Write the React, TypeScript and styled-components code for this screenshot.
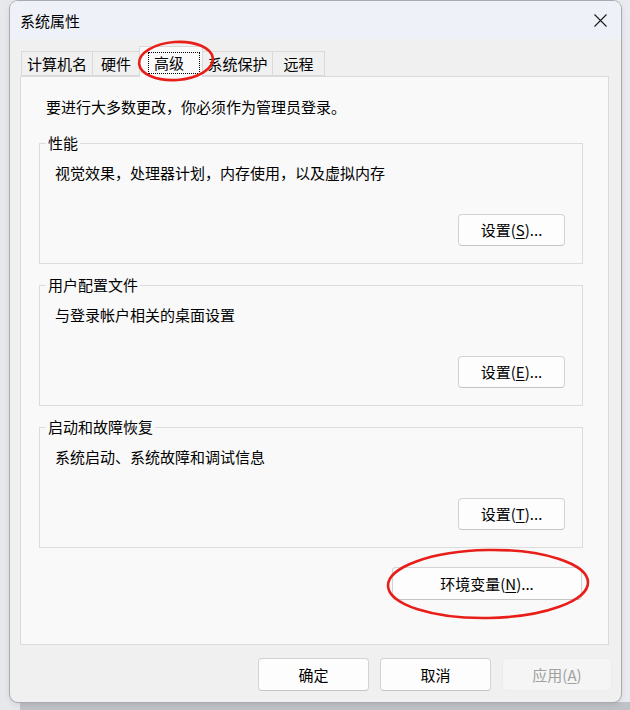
import React from "react";
import styled, { createGlobalStyle } from "styled-components";

const Global = createGlobalStyle`
  html, body { margin: 0; padding: 0; }
  body {
    font-family: "Noto Sans CJK SC", "Noto Sans", sans-serif;
    font-size: 15px;
    color: #000;
  }
`;

const Desktop = styled.div`
  width: 630px;
  height: 710px;
  overflow: hidden;
  background:
    linear-gradient(to right, #e6e8eb 0, #e6e8eb 20px, transparent 20px),
    linear-gradient(to bottom, #e9ebee 0, #e9ebee 702px, #bfc2c6 702px);
  padding-top: 1px;
  box-sizing: border-box;
`;

const Window = styled.div`
  position: relative;
  margin-left: 10px;
  width: 611px;
  height: 701px;
  border-radius: 8px;
  background: #f0f0f0;
  box-shadow: 0 0 0 1px #a9abae, 0 2px 6px rgba(0, 0, 0, 0.12);
  overflow: hidden;
  display: flex;
  flex-direction: column;
`;

const TitleBar = styled.div`
  height: 38px;
  flex: none;
  background: #eef2f8;
  display: flex;
  align-items: center;
  justify-content: space-between;
  padding-left: 10px;
`;

const Title = styled.span`
  line-height: 20px;
  margin-top: 1px;
`;

const CloseButton = styled.div`
  width: 46px;
  height: 38px;
  display: flex;
  align-items: center;
  justify-content: center;
  margin-right: -2px;
`;

const TabStrip = styled.div`
  height: 37px;
  flex: none;
  display: flex;
  align-items: flex-end;
  margin-left: 11px;
  position: relative;
  z-index: 1;
`;

const Tab = styled.div<{ $w: number; $active?: boolean }>`
  width: ${(p) => p.$w}px;
  height: ${(p) => (p.$active ? 31 : 25)}px;
  box-sizing: border-box;
  border: 1px solid #dadada;
  border-bottom: ${(p) => (p.$active ? "none" : "1px solid #dadada")};
  margin-left: -1px;
  background: ${(p) => (p.$active ? "#f9f9f9" : "#f0f0f0")};
  display: flex;
  align-items: ${(p) => (p.$active ? "flex-start" : "center")};
  justify-content: ${(p) => (p.$active ? "flex-start" : "center")};
  padding: ${(p) => (p.$active ? "5px 0 0 8px" : "0")};
  line-height: 20px;
  white-space: nowrap;
  margin-bottom: ${(p) => (p.$active ? "-1px" : "0")};
  &:first-child { margin-left: 0; }
`;

const FocusBox = styled.span`
  width: 52px;
  height: 22px;
  box-sizing: border-box;
  border: 1px dotted #000;
  padding-left: 5px;
  line-height: 20px;
`;

const Panel = styled.div`
  margin-left: 10px;
  width: 589px;
  height: 569px;
  flex: none;
  box-sizing: border-box;
  border: 1px solid #dadada;
  background: #f9f9f9;
  padding: 20px 25px 0 18px;
  display: flex;
  flex-direction: column;
`;

const Intro = styled.div`
  padding-left: 7px;
  line-height: 20px;
  margin-bottom: 16px;
`;

const Group = styled.fieldset`
  margin: 0 0 11px 0;
  padding: 0 17px 17px 15px;
  border: 1px solid #dcdcdc;
  min-width: 0;
  display: flex;
  flex-direction: column;
`;

const Legend = styled.legend`
  margin-left: -9px;
  padding: 0 2px;
  line-height: 20px;
`;

const GroupText = styled.div`
  line-height: 20px;
  margin-top: 10px;
  margin-bottom: 31px;
`;

const Button = styled.div<{ $w: number; $h?: number; $disabled?: boolean }>`
  width: ${(p) => p.$w}px;
  height: ${(p) => p.$h ?? 32}px;
  box-sizing: border-box;
  border: 1px solid ${(p) => (p.$disabled ? "#ececec" : "#d3d3d3")};
  border-bottom-color: ${(p) => (p.$disabled ? "#ececec" : "#c4c4c4")};
  border-radius: 4px;
  background: ${(p) => (p.$disabled ? "#f5f5f5" : "#fdfdfd")};
  color: ${(p) => (p.$disabled ? "#a0a0a0" : "#000")};
  display: flex;
  align-items: center;
  justify-content: center;
  line-height: 20px;
  align-self: flex-end;
  white-space: nowrap;
`;

const Key = styled.span`
  text-decoration: underline;
  text-underline-offset: 2px;
`;

const EnvRow = styled.div`
  display: flex;
  justify-content: flex-end;
  margin-top: 8px;
  margin-right: 1px;
`;

const Footer = styled.div`
  display: flex;
  justify-content: flex-end;
  gap: 11px;
  padding: 13px 9px 0 0;
`;

const Annotations = styled.svg`
  position: absolute;
  left: 0;
  top: 0;
  width: 611px;
  height: 701px;
  pointer-events: none;
  z-index: 5;
`;

function Setting({ k }: { k: string }) {
  return (
    <Button $w={107}>
      设置(<Key>{k}</Key>)...
    </Button>
  );
}

export default function App() {
  return (
    <>
      <Global />
      <Desktop>
        <Window>
          <TitleBar>
            <Title>系统属性</Title>
            <CloseButton>
              <svg width="13" height="13" viewBox="0 0 13 13">
                <path d="M0.5 0.5 L12.5 12.5 M12.5 0.5 L0.5 12.5" stroke="#1b1b1b" strokeWidth="1.1" fill="none" />
              </svg>
            </CloseButton>
          </TitleBar>
          <TabStrip>
            <Tab $w={72}>计算机名</Tab>
            <Tab $w={48}>硬件</Tab>
            <Tab $w={64} $active>
              <FocusBox>高级</FocusBox>
            </Tab>
            <Tab $w={71}>系统保护</Tab>
            <Tab $w={53}>远程</Tab>
          </TabStrip>
          <Panel>
            <Intro>要进行大多数更改，你必须作为管理员登录。</Intro>
            <Group>
              <Legend>性能</Legend>
              <GroupText>视觉效果，处理器计划，内存使用，以及虚拟内存</GroupText>
              <Setting k="S" />
            </Group>
            <Group>
              <Legend>用户配置文件</Legend>
              <GroupText>与登录帐户相关的桌面设置</GroupText>
              <Setting k="E" />
            </Group>
            <Group>
              <Legend>启动和故障恢复</Legend>
              <GroupText>系统启动、系统故障和调试信息</GroupText>
              <Setting k="T" />
            </Group>
            <EnvRow>
              <Button $w={190} $h={33}>
                环境变量(<Key>N</Key>)...
              </Button>
            </EnvRow>
          </Panel>
          <Footer>
            <Button $w={111} $h={33}>确定</Button>
            <Button $w={111} $h={33}>取消</Button>
            <Button $w={110} $h={33} $disabled>
              应用(<Key>A</Key>)
            </Button>
          </Footer>
          <Annotations viewBox="0 0 611 701">
            <ellipse cx="166" cy="60" rx="37" ry="19" transform="rotate(-4 166 60)" fill="none" stroke="#e81e19" strokeWidth="2.6" />
            <ellipse cx="478" cy="583" rx="100" ry="34" transform="rotate(-1 478 583)" fill="none" stroke="#e81e19" strokeWidth="2.6" />
          </Annotations>
        </Window>
      </Desktop>
    </>
  );
}
